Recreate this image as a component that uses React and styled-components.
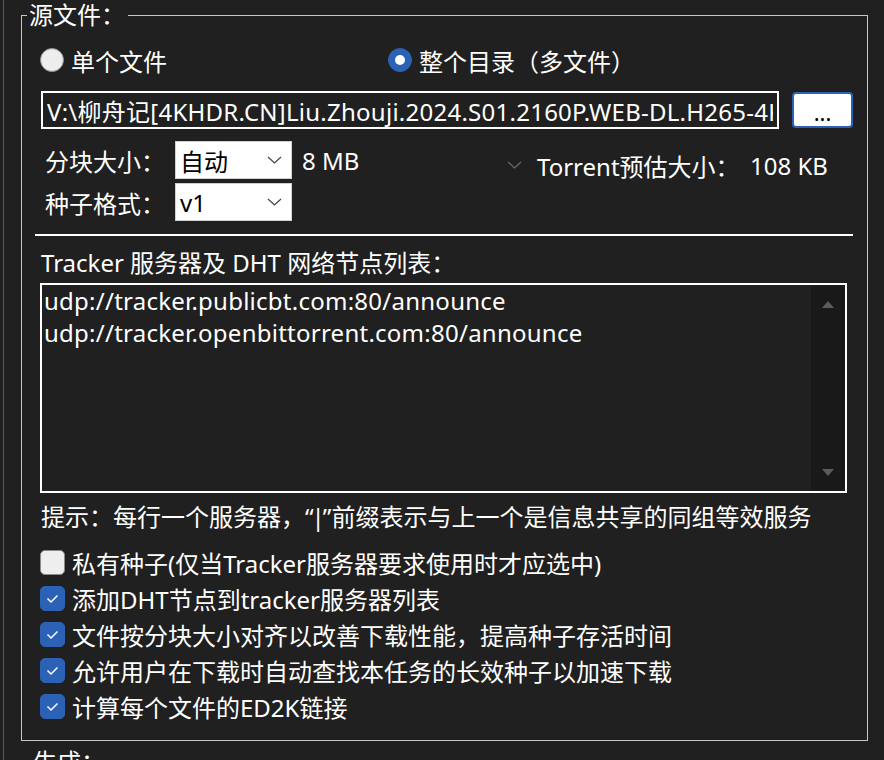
import React from 'react';
import styled, { createGlobalStyle } from 'styled-components';

const GlobalStyle = createGlobalStyle`
    html, body {
        margin: 0;
        background: #202020;
    }
    body {
        font-family: "Noto Sans", "Noto Sans CJK SC", sans-serif;
        font-size: 24px;
        color: #ffffff;
    }
`;

const trackers = [
    'udp://tracker.publicbt.com:80/announce',
    'udp://tracker.openbittorrent.com:80/announce',
];

const options = [
    { label: '私有种子(仅当Tracker服务器要求使用时才应选中)', checked: false },
    { label: '添加DHT节点到tracker服务器列表', checked: true },
    { label: '文件按分块大小对齐以改善下载性能，提高种子存活时间', checked: true },
    { label: '允许用户在下载时自动查找本任务的长效种子以加速下载', checked: true },
    { label: '计算每个文件的ED2K链接', checked: true },
];

function Chevron({ color }) {
    return (
        <svg width="15" height="8" viewBox="0 0 15 8">
            <polyline points="1,1 7.5,7 14,1" fill="none" stroke={color} strokeWidth="1.2" />
        </svg>
    );
}

function Select({ value }) {
    return (
        <SelectBox>
            <span>{value}</span>
            <Chevron color="#444" />
        </SelectBox>
    );
}

function Check({ checked, children }) {
    return (
        <CheckRow>
            <CheckBox checked={checked}>
                {checked && (
                    <svg width="25" height="25" viewBox="0 0 25 25">
                        <polyline points="7.5,12.5 11,16 17.5,9.5" fill="none" stroke="#fff" strokeWidth="1.5" />
                    </svg>
                )}
            </CheckBox>
            <span>{children}</span>
        </CheckRow>
    );
}

export default function App() {
    return (
        <Page>
            <GlobalStyle />
            <Frame>
                <Group>
                    <Legend>源文件：</Legend>

                    {/* SOURCE TYPE */}
                    <RadioRow>
                        <RadioOption width={349}>
                            <Radio />
                            <span>单个文件</span>
                        </RadioOption>
                        <RadioOption>
                            <Radio selected />
                            <span>整个目录（多文件）</span>
                        </RadioOption>
                    </RadioRow>

                    {/* PATH */}
                    <PathRow>
                        <PathInput
                            readOnly
                            value="V:\柳舟记[4KHDR.CN]Liu.Zhouji.2024.S01.2160P.WEB-DL.H265-4KHDR.CN"
                        />
                        <BrowseButton>...</BrowseButton>
                    </PathRow>

                    {/* PIECE SIZE / FORMAT */}
                    <FieldRow top={12}>
                        <FieldLabel>分块大小：</FieldLabel>
                        <Select value="自动" />
                        <SizeText>8 MB</SizeText>
                        <Estimate>
                            <Chevron color="#6a6a6a" />
                            <EstimateLabel>Torrent预估大小：</EstimateLabel>
                            <span>108 KB</span>
                        </Estimate>
                    </FieldRow>
                    <FieldRow top={4}>
                        <FieldLabel>种子格式：</FieldLabel>
                        <Select value="v1" />
                    </FieldRow>

                    <Separator />

                    {/* TRACKERS */}
                    <TextLine top={12}>Tracker 服务器及 DHT 网络节点列表：</TextLine>
                    <TrackerBox>
                        <TrackerText>
                            {trackers.map(t => <div key={t}>{t}</div>)}
                        </TrackerText>
                        <ScrollBar>
                            <svg width="14" height="8" viewBox="0 0 14 8">
                                <polygon points="1,8 7,1 13,8" fill="#5c5c5c" />
                            </svg>
                            <svg width="14" height="8" viewBox="0 0 14 8">
                                <polygon points="1,0 13,0 7,7" fill="#5c5c5c" />
                            </svg>
                        </ScrollBar>
                    </TrackerBox>
                    <TextLine top={9}>
                        提示：每行一个服务器，<Quote>“|”</Quote>前缀表示与上一个是信息共享的同组等效服务
                    </TextLine>

                    {/* OPTIONS */}
                    <CheckList>
                        {options.map(o => (
                            <Check key={o.label} checked={o.checked}>{o.label}</Check>
                        ))}
                    </CheckList>
                </Group>
                <NextGroup>
                    <NextLegend>生成：</NextLegend>
                </NextGroup>
            </Frame>
        </Page>
    );
}

// STYLES //

const Page = styled.div`
    height: 760px;
    overflow: hidden;
    padding-left: 3px;
    box-sizing: border-box;
`;

const Frame = styled.div`
    border-left: 1px solid #5a5a5a;
    padding: 3px 0 0 17px;
    height: 100%;
    box-sizing: border-box;
`;

const Group = styled.fieldset`
    margin: 0;
    width: 847px;
    box-sizing: border-box;
    border: 1px solid #c8c8c8;
    padding: 0 14px 16px 19px;
    display: flex;
    flex-direction: column;
`;

const Legend = styled.legend`
    margin-left: -14px;
    padding: 0 3px 0 2px;
    line-height: 24px;
`;

const RadioRow = styled.div`
    display: flex;
    align-items: center;
    height: 32px;
    margin-top: 17px;
`;

const RadioOption = styled.label`
    display: flex;
    align-items: center;
    gap: 7px;
    width: ${p => (p.width ? `${p.width}px` : 'auto')};
    margin-left: -1px;
`;

const Radio = styled.span`
    width: 24px;
    height: 24px;
    border-radius: 50%;
    box-sizing: border-box;
    display: flex;
    align-items: center;
    justify-content: center;
    background: ${p => (p.selected ? '#2c62b6' : '#ededed')};
    border: 1px solid ${p => (p.selected ? '#2c62b6' : '#8a8a8a')};

    &::after {
        content: '';
        display: ${p => (p.selected ? 'block' : 'none')};
        width: 10px;
        height: 10px;
        border-radius: 50%;
        background: #ffffff;
    }
`;

const PathRow = styled.div`
    display: flex;
    align-items: center;
    gap: 13px;
    height: 38px;
    margin-top: 15px;
`;

const PathInput = styled.input`
    width: 738px;
    height: 38px;
    box-sizing: border-box;
    border: 2px solid #ffffff;
    background: #202020;
    color: #ffffff;
    font: inherit;
    letter-spacing: 0.25px;
    padding: 0 4px;
    outline: none;
`;

const BrowseButton = styled.button`
    width: 61px;
    height: 36px;
    box-sizing: border-box;
    background: #ffffff;
    border: 2px solid #2c62b6;
    border-radius: 4px;
    color: #000000;
    font: inherit;
    font-size: 22px;
    line-height: 1;
    padding: 4px 0 0;
`;

const FieldRow = styled.div`
    display: flex;
    align-items: center;
    height: 38px;
    margin-top: ${p => p.top}px;
`;

const FieldLabel = styled.span`
    width: 130px;
    margin-left: 4px;
`;

const SelectBox = styled.div`
    width: 117px;
    height: 38px;
    box-sizing: border-box;
    background: #ffffff;
    border: 1px solid #d0d0d0;
    color: #000000;
    display: flex;
    align-items: center;
    justify-content: space-between;
    padding: 0 9px 0 4px;
`;

const SizeText = styled.span`
    width: 205px;
    margin-left: 10px;
`;

const Estimate = styled.div`
    display: flex;
    align-items: center;
    margin-top: 10px;

    svg {
        margin-right: 15px;
    }
`;

const EstimateLabel = styled.span`
    width: 213px;
`;

const Separator = styled.div`
    height: 2px;
    background: #ffffff;
    margin: 13px 0 0 -6px;
`;

const TextLine = styled.div`
    height: 30px;
    line-height: 30px;
    margin-top: ${p => p.top}px;
    white-space: nowrap;
`;

const Quote = styled.span`
    letter-spacing: -2px;
    margin-right: 2px;
`;

const TrackerBox = styled.div`
    display: flex;
    height: 210px;
    box-sizing: border-box;
    border: 2px solid #ffffff;
    margin: 5px 6px 0 -1px;
`;

const TrackerText = styled.div`
    flex: 1;
    padding: 0 2px;
    line-height: 32px;
    letter-spacing: 0.25px;
    white-space: nowrap;
    overflow: hidden;
`;

const ScrollBar = styled.div`
    width: 34px;
    background: #191919;
    display: flex;
    flex-direction: column;
    align-items: center;
    justify-content: space-between;
    padding: 15px 0 14px;
`;

const CheckList = styled.div`
    display: flex;
    flex-direction: column;
    margin-top: 12px;
`;

const CheckRow = styled.label`
    display: flex;
    align-items: center;
    gap: 7px;
    height: 36px;
    margin-left: -1px;
    white-space: nowrap;
`;

const CheckBox = styled.span`
    width: 25px;
    height: 25px;
    box-sizing: border-box;
    border-radius: 5px;
    display: flex;
    background: ${p => (p.checked ? '#2c62b6' : '#eeeeee')};
    border: 1px solid ${p => (p.checked ? '#2c62b6' : '#8a8a8a')};

    svg {
        margin: -1px;
    }
`;

const NextGroup = styled.fieldset`
    margin: 9px 0 0;
    width: 847px;
    box-sizing: border-box;
    border: 1px solid #c8c8c8;
    padding: 0 14px 16px 19px;
`;

const NextLegend = styled(Legend)`
    margin-left: -10px;
`;
